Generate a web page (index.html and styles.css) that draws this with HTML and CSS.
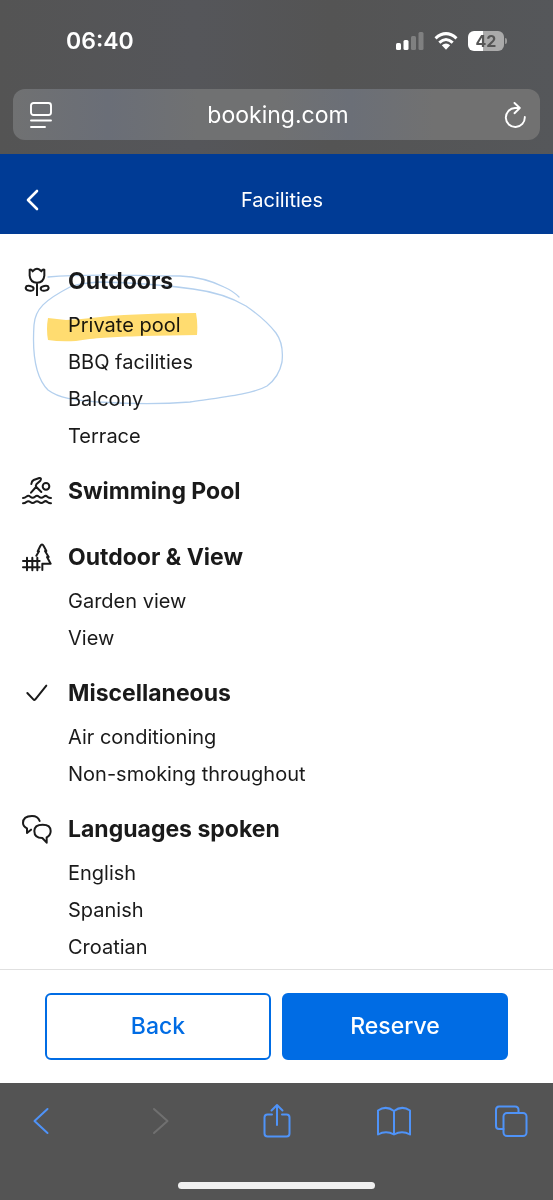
FILE: index.html
```html
<!DOCTYPE html>
<html lang="en">
<head>
<meta charset="utf-8">
<meta name="viewport" content="width=device-width, initial-scale=1">
<title>Facilities</title>
<link rel="stylesheet" href="styles.css">
</head>
<body>
<div class="browser-top">
  <div class="status">
    <span class="clock">06:40</span>
    <div class="status-icons">
      <svg width="28" height="18" viewBox="0 0 28 18" fill="#fff"><rect y="11" width="5" height="7" rx="1.5"/><rect x="7.5" y="8" width="5" height="10" rx="1.5"/><g opacity=".25"><rect x="15" y="4" width="5" height="14" rx="1.5"/><rect x="22.500" width="5" height="18" rx="1.500"/></g></svg>
      <svg width="24" height="18" viewBox="0 0 24 18"><g fill="none" stroke="#fff" stroke-width="3"><path d="M1.500 6.300Q12-3 22.500 6.300"/><path d="M5.300 10.600Q12 4.500 18.700 10.600"/></g><path d="M7.800 13.300Q12 9.800 16.200 13.300L12 17.800Z" fill="#fff"/></svg>
      <div class="battery"><span class="battery-level">42</span></div>
    </div>
  </div>
  <div class="address">
    <button class="address-btn" aria-label="Page menu"><svg width="22" height="26" viewBox="0 0 22 26" fill="none" stroke="#fff" stroke-width="1.900" stroke-linecap="round"><rect x="1" y="1" width="20" height="12" rx="2.500"/><path d="M1 18.500H21M1 25H15"/></svg></button>
    <input class="address-input" type="text" value="booking.com" aria-label="Address">
    <button class="address-btn" aria-label="Reload"><svg width="22" height="26" viewBox="0 0 22 26" fill="none" stroke="#fff" stroke-width="1.900" stroke-linecap="round" stroke-linejoin="round"><path d="M15.500 6H11A9.500 9.500 0 1 0 20.800 15M10.500 1L15.800 6L10.500 11.200"/></svg></button>
  </div>
</div>
<header class="page-header">
  <button class="header-back" aria-label="Go back"><svg width="14" height="22" viewBox="0 0 14 22" fill="none" stroke="#fff" stroke-width="2.600" stroke-linecap="round" stroke-linejoin="round"><path d="M12 2L3 11L12 20"/></svg></button>
  <h1 class="page-title">Facilities</h1>
</header>
<main class="facilities">
  <section class="group marked">
    <h2 class="group-title"><svg class="icon" viewBox="65 47 90 90"><path d="M88 58Q94 57 97 63L104 57Q110 53 116 57L123 63Q126 57 132 58V76Q130 97 110 97T88 76ZM110 97V135"/><ellipse cx="88" cy="114" rx="12" ry="7" transform="rotate(12 88 114)"/><ellipse cx="133" cy="114" rx="12" ry="7" transform="rotate(-12 133 114)"/></svg>Outdoors</h2>
    <ul class="items"><li>Private pool</li><li>BBQ facilities</li><li>Balcony</li><li>Terrace</li></ul>
    <svg class="marker" width="300" height="150" viewBox="0 265 300 150" aria-hidden="true"><path d="M48 318L66 320C88 319 104 316 124 315Q160 313 196 313Q198 323 197 335L143 336C112 337 94 338 76 341Q60 342 48 340Q46 329 48 318Z" fill="#ffdc70"/></svg>
    <svg class="marker" width="300" height="150" viewBox="0 265 300 150" aria-hidden="true"><g fill="none" stroke="#b4d0ee" stroke-width="1.300" stroke-linecap="round"><path d="M48 277C90 273 130 276 180 276C202 277 216 283 224 287Q233 291 239 297"/><path d="M70 287C45 300 35 309 34 325C32 355 36 378 48 390C60 399 75 400 98 402C130 404 165 404 190 402C225 397 253 394 267 386Q279 377 282 362Q284 344 276 333Q265 319 246 306Q224 293 193 289Q150 283 100 282Q80 283 70 287"/></g></svg>
  </section>
  <section class="group">
    <h2 class="group-title"><svg class="icon" viewBox="65 36 90 90"><circle cx="137" cy="67" r="10"/><path d="M93 60Q94 51 100 48L117 42Q125 42 120 50L108 61Q105 65 108 69L123 84M107 69L92 86"/><path d="M68 102Q74 102 78 98Q84 93 90 98Q97 104 104 98Q110 93 116 98Q123 104 130 98Q136 93 141 98Q146 102 152 102M68 118Q74 118 78 114Q84 109 90 114Q97 120 104 114Q110 109 116 114Q123 120 130 114Q136 109 141 114Q146 118 152 118"/></svg>Swimming Pool</h2>
  </section>
  <section class="group">
    <h2 class="group-title"><svg class="icon" viewBox="65 232 90 90"><path d="M68 289H118M68 308H118M80 279V317M96 279V317M111 279V317M108 273L116 260H112L120 244Q125 235 130 244L138 259H134L145 277H140L151 297H126V316"/></svg>Outdoor &amp; View</h2>
    <ul class="items"><li>Garden view</li><li>View</li></ul>
  </section>
  <section class="group">
    <h2 class="group-title"><svg class="icon" viewBox="65 39 90 90"><path d="M81 84L99 103Q102 106 105 103L138 62"/></svg>Miscellaneous</h2>
    <ul class="items"><li>Air conditioning</li><li>Non-smoking throughout</li></ul>
  </section>
  <section class="group">
    <h2 class="group-title"><svg class="icon" viewBox="65 443 90 90"><path d="M118 464Q113 449 95 449Q68 449 68 470Q68 480 80 486V500L92 490M139 529V513Q151 507 151 494Q151 475 127 475Q102 475 102 494Q102 515 126 515Z"/></svg>Languages spoken</h2>
    <ul class="items"><li>English</li><li>Spanish</li><li>Croatian</li></ul>
  </section>
</main>
<div class="actions">
  <button class="btn">Back</button>
  <button class="btn btn-primary">Reserve</button>
</div>
<nav class="browser-bottom" aria-label="Browser">
  <div class="tools">
    <button class="tool" aria-label="Back"><svg viewBox="0 0 34 36"><path d="M22.500 6L9.500 18L22.500 30"/></svg></button>
    <button class="tool tool-off" aria-label="Forward" disabled><svg viewBox="0 0 34 36"><path d="M12 6L25.500 18L12 30"/></svg></button>
    <button class="tool" aria-label="Share"><svg viewBox="0 0 34 36"><path d="M12 11.500H7.500Q4.500 11.500 4.500 14.500V30.500Q4.500 33.500 7.500 33.500H26.500Q29.500 33.500 29.500 30.500V14.500Q29.500 11.500 26.500 11.500H22M17 22V2M11.500 7.500L17 2L22.500 7.500"/></svg></button>
    <button class="tool" aria-label="Bookmarks"><svg viewBox="0 0 34 36"><path d="M17 8Q9 2 1 7.500V31.500Q9 27 17 31.500Q25 27 33 31.500V7.500Q25 2 17 8V31"/></svg></button>
    <button class="tool" aria-label="Tabs"><svg viewBox="0 0 34 36"><rect x="9.500" y="10" width="23" height="23" rx="3.500"/><path d="M9.500 26H5Q2 26 2 23V7Q2 3.500 5 3.500H21Q24.500 3.500 24.500 7V10"/></svg></button>
  </div>
  <div class="home-bar"></div>
</nav>
</body>
</html>
```
FILE: styles.css
```css
* { box-sizing: border-box; }
body {
  margin: 0;
  min-height: 100vh;
  display: flex;
  flex-direction: column;
  background: #fff;
  color: #1a1a1a;
  font-family: Inter, "Liberation Sans", sans-serif;
}
button {
  padding: 0;
  border: 0;
  background: none;
  font: inherit;
  color: inherit;
}
svg { display: block; }
.browser-top {
  padding: 0 13px 14px;
  background: linear-gradient(90deg, #545454, #55565a 35%, #545454 60%, #55575a);
  color: #fff;
}
.status {
  display: flex;
  justify-content: space-between;
  align-items: center;
  height: 89px;
  padding: 0 33px 7px 53px;
}
.clock {
  font-size: 23px;
  font-weight: 600;
}
.status-icons {
  display: flex;
  align-items: center;
  gap: 10px;
}
.battery {
  display: flex;
  align-items: center;
  gap: 1px;
}
.battery::after {
  content: "";
  width: 2px;
  height: 6px;
  border-radius: 0 2px 2px 0;
  background: #9a9a9a;
}
.battery-level {
  width: 36px;
  border-radius: 6px;
  background: linear-gradient(90deg, #fff 43%, #aaa 43%);
  color: #555;
  font-size: 16px;
  font-weight: 700;
  line-height: 20px;
  text-align: center;
}
.address {
  display: flex;
  align-items: center;
  height: 51px;
  padding: 0 14px 0 17px;
  border-radius: 12px;
  background: linear-gradient(90deg, #707172, #6a6e77 18%, #707172 35%, #707172 50%, #6b6f77 64%, #717171 80%);
}
.address-input {
  flex: 1;
  min-width: 0;
  border: 0;
  background: none;
  color: #fff;
  font-family: inherit;
  font-size: 23px;
  line-height: 32px;
  text-align: center;
}
.page-header {
  display: grid;
  grid-template-columns: 1fr auto 1fr;
  align-items: center;
  height: 80px;
  padding: 12px 14px 0 25px;
  background: #003b95;
  color: #fff;
}
.header-back { justify-self: start; }
.page-title {
  grid-column: 2;
  margin: 0;
  font-size: 20px;
  font-weight: 400;
  line-height: 32px;
}
.facilities {
  flex: 1;
  display: flex;
  flex-direction: column;
  gap: 20px;
  padding: 31px 22px 3px;
}
.group {
  min-height: 46px;
}
.marked { position: relative; }
.group-title {
  display: flex;
  align-items: center;
  gap: 16px;
  margin: 0 0 10px;
  font-size: 23px;
  font-weight: 700;
  line-height: 32px;
}
.icon {
  width: 30px;
  height: 30px;
  fill: none;
  stroke: #1a1a1a;
  stroke-width: 6;
  stroke-linecap: round;
  stroke-linejoin: round;
}
.items {
  margin: 0;
  padding: 0 0 0 46px;
  list-style: none;
  font-size: 20px;
  line-height: 37px;
}
.marker {
  position: absolute;
  top: 0;
  left: -22px;
  pointer-events: none;
  mix-blend-mode: multiply;
}
.actions {
  display: flex;
  gap: 11px;
  padding: 23px 45px;
  border-top: 1px solid #e0e0e0;
}
.btn {
  flex: 1;
  height: 67px;
  padding-bottom: 2px;
  border: 2px solid #006ce4;
  border-radius: 6px;
  color: #006ce4;
  font-size: 23px;
  font-weight: 500;
}
.btn-primary {
  background: #006ce4;
  color: #fff;
}
.browser-bottom {
  display: flex;
  flex-direction: column;
  align-items: center;
  justify-content: space-between;
  height: 117px;
  padding: 20px 25px 11px;
  background: #545454;
}
.tools {
  display: flex;
  justify-content: space-between;
  width: 100%;
}
.tool {
  width: 34px;
  height: 36px;
  color: #4f93f8;
}
.tool svg {
  fill: none;
  stroke: currentColor;
  stroke-width: 2;
  stroke-linecap: round;
  stroke-linejoin: round;
}
.tool-off { color: #707070; }
.home-bar {
  width: 197px;
  height: 7px;
  border-radius: 4px;
  background: #f0f0f0;
}
```
